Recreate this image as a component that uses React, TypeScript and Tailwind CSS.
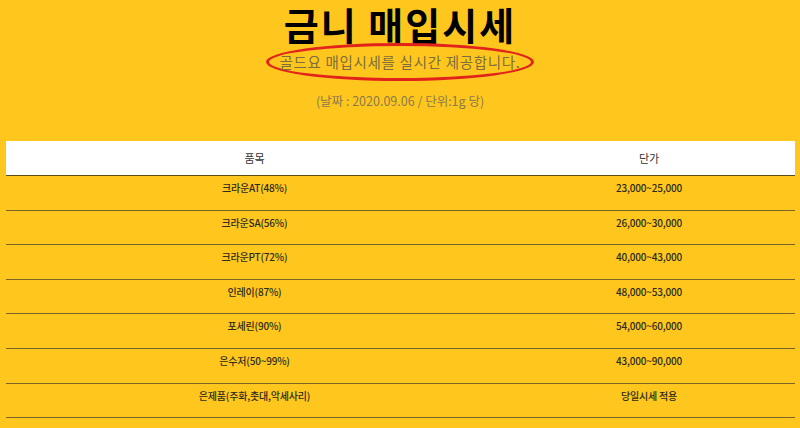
import React from 'react';

const rows = [
  { name: '크라운AT(48%)', price: '23,000~25,000' },
  { name: '크라운SA(56%)', price: '26,000~30,000' },
  { name: '크라운PT(72%)', price: '40,000~43,000' },
  { name: '인레이(87%)', price: '48,000~53,000' },
  { name: '포세린(90%)', price: '54,000~60,000' },
  { name: '은수저(50~99%)', price: '43,000~90,000' },
  { name: '은제품(주화,촛대,악세사리)', price: '당일시세 적용' },
];

const App = () => {
  return (
    <div
      className="min-h-screen w-full overflow-hidden bg-[#ffc71e] text-[#222]"
      style={{ fontFamily: '"Noto Sans CJK KR", "Noto Sans", sans-serif' }}
    >
      {/* Heading */}
      <div className="flex flex-col items-center pt-[3px]">
        <h1 className="text-[38px] font-bold leading-[42px] tracking-[2px] text-black">
          금니 매입시세
        </h1>
        <p className="mt-[-2px] inline-block rounded-[50%] border-[3px] border-[#e2231c] px-[10px] py-[6px] text-[14.5px] leading-[20px] tracking-[0.7px] text-[#7d6c3f]">
          골드요 매입시세를 실시간 제공합니다.
        </p>
        <p className="mt-[11px] text-[12.5px] leading-[18px] text-[#8b7a4c]">
          (날짜 : 2020.09.06 / 단위:1g 당)
        </p>
      </div>

      {/* Price table */}
      <div className="mt-[31px] px-[6px] pr-[5px]">
        <div className="flex h-[35px] items-center border-b border-[#5e4c17] bg-white text-[11px] text-[#333]">
          <div className="w-[497px] text-center">품목</div>
          <div className="flex-1 text-center">단가</div>
        </div>
        {rows.map((r) => (
          <div
            key={r.name}
            className="flex h-[34.6px] items-start border-b border-[#7a6428] pt-[4px] text-[10px] font-medium tracking-[-0.2px] text-[#2d2a20]"
          >
            <div className="w-[497px] text-center">{r.name}</div>
            <div className="flex-1 text-center">{r.price}</div>
          </div>
        ))}
      </div>
    </div>
  );
};

export default App;
